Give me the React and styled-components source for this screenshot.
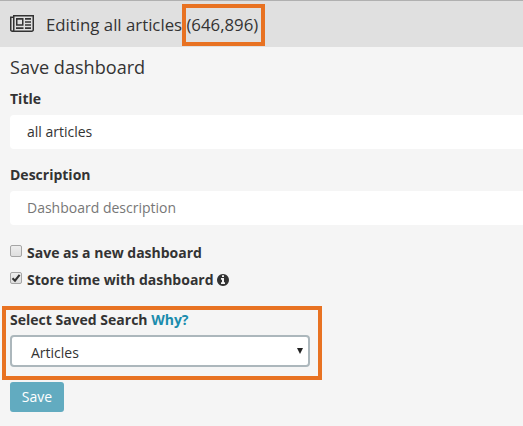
import React, { useState } from "react";
import styled, { createGlobalStyle } from "styled-components";

const GlobalStyle = createGlobalStyle`
  * { box-sizing: border-box; }
  body {
    margin: 0;
    background: #f5f5f5;
    color: #333;
    font: 14px/20px "Open Sans", "Noto Sans", sans-serif;
    overflow: hidden;
  }
`;

const Page = styled.main`
  height: 426px;
  overflow: hidden;
`;

const Header = styled.header`
  display: flex;
  align-items: center;
  height: 47px;
  padding: 1px 10px 0;
  border-top: 1px solid #b0b0b0;
  background: #e0e0e0;
  font-size: 16.8px;
  line-height: 24px;
  white-space: pre;
`;

const NewspaperIcon = styled.svg`
  flex: none;
  width: 24px;
  height: 17px;
  margin: -3px 12px 0 0;
`;

const Highlight = styled.span`
  position: absolute;
  inset: ${(p) => p.$inset};
  border: 4px solid #e87222;
  outline: 1px solid rgba(232, 114, 34, 0.4);
  outline-offset: -1px;
  pointer-events: none;
`;

const Count = styled.span`
  position: relative;
`;

const Form = styled.form`
  display: flex;
  flex-direction: column;
  align-items: flex-start;
  padding: 8px 0 0 10px;
`;

const Heading = styled.h1`
  margin: 0 0 9px;
  font-size: 18.1px;
  line-height: 25px;
  font-weight: 400;
`;

const Label = styled.label`
  height: 20px;
  margin-bottom: 6px;
  font-weight: 700;
`;

const TextInput = styled.input`
  width: 100%;
  height: 34px;
  margin-bottom: 16px;
  padding: 0 17px 1px;
  border: 0;
  border-radius: 4px 0 0 4px;
  background: #fff;
  color: #333;
  font: inherit;
  outline: none;
  &::placeholder { color: #777; opacity: 1; }
`;

const CheckRow = styled.label`
  display: flex;
  align-items: center;
  height: 20px;
  margin: ${(p) => p.$margin};
  font-weight: 700;
`;

const Checkbox = styled.input`
  appearance: none;
  display: grid;
  place-items: center;
  width: 12px;
  height: 12px;
  margin: -4px 5px 0 0;
  border: 1px solid #a5a5a5;
  border-radius: 2px;
  background: linear-gradient(#eee, #dedede);
`;

const CheckBoxWrap = styled.span`
  position: relative;
  display: flex;
`;

const Tick = styled.svg`
  position: absolute;
  left: 1px;
  top: -3px;
  width: 10px;
  height: 10px;
  pointer-events: none;
`;

const InfoIcon = styled.svg`
  width: 12px;
  height: 12px;
  margin-left: 3px;
`;

const SearchGroup = styled.div`
  position: relative;
  display: flex;
  flex-direction: column;
  width: 300px;
`;

const WhyLink = styled.a`
  color: #1b8cad;
`;

const SearchLabel = styled(Label)`
  margin-bottom: 5px;
`;

const SelectBox = styled.button`
  display: flex;
  align-items: center;
  justify-content: space-between;
  width: 300px;
  height: 32px;
  padding: 3px 5px 0 19px;
  border: 2px solid #acb7bc;
  border-radius: 4px;
  background: #fff;
  color: #333;
  font: inherit;
`;

const Arrow = styled.svg`
  width: 6px;
  height: 6px;
  margin-top: -3px;
`;

const SaveButton = styled.button`
  width: 54px;
  height: 30px;
  margin-top: 15px;
  padding: 0;
  border: 0;
  border-radius: 3px;
  background: #62abc0;
  color: #fff;
  font: inherit;
`;

function CheckOption({ label, initial, margin, children }) {
  const [checked, setChecked] = useState(initial);
  return (
    <CheckRow $margin={margin}>
      <CheckBoxWrap>
        <Checkbox type="checkbox" checked={checked} onChange={() => setChecked(!checked)} />
        {checked && (
          <Tick viewBox="0 0 10 10">
            <path d="M1.5 5.2 4 7.7 8.6 1.8" fill="none" stroke="#333" strokeWidth="2.1" />
          </Tick>
        )}
      </CheckBoxWrap>
      {label}
      {children}
    </CheckRow>
  );
}

export default function App() {
  return (
    <Page>
      <GlobalStyle />
      <Header>
        <NewspaperIcon viewBox="0 384 2048 1408" preserveAspectRatio="none" fill="#333">
          <path d="M1024 640h-384v384h384v-384zm128 640v128h-640v-128h640zm0-768v640h-640v-640h640zm640 768v128h-512v-128h512zm0-256v128h-512v-128h512zm0-256v128h-512v-128h512zm0-256v128h-512v-128h512zm-1536 960v-960h-128v960q0 26 19 45t45 19 45-19 19-45zm1664 0v-1088h-1536v1088q0 33-11 64h1483q26 0 45-19t19-45zm128-1216v1216q0 80-56 136t-136 56h-1664q-80 0-136-56t-56-136v-1088h256v-128h1792z" transform="translate(0 128)" />
        </NewspaperIcon>
        Editing all articles{" "}
        <Count>
          (646,896)
          <Highlight $inset="-9px -7px -9px -4px" />
        </Count>
      </Header>
      <Form onSubmit={(e) => e.preventDefault()}>
        <Heading>Save dashboard</Heading>
        <Label htmlFor="title">Title</Label>
        <TextInput id="title" defaultValue="all articles" />
        <Label htmlFor="description">Description</Label>
        <TextInput id="description" placeholder="Dashboard description" />
        <CheckOption label="Save as a new dashboard" initial={false} margin="2px 0 7px" />
        <CheckOption label="Store time with dashboard" initial={true} margin="0 0 20px">
          <InfoIcon viewBox="0 128 1536 1536" fill="#333">
            <path d="M1024 1376v-160q0-14-9-23t-23-9h-96v-512q0-14-9-23t-23-9h-320q-14 0-23 9t-9 23v160q0 14 9 23t23 9h96v320h-96q-14 0-23 9t-9 23v160q0 14 9 23t23 9h448q14 0 23-9t9-23zm-128-896v-160q0-14-9-23t-23-9h-192q-14 0-23 9t-9 23v160q0 14 9 23t23 9h192q14 0 23-9t9-23zm640 416q0 209-103 385.5t-279.5 279.5-385.5 103-385.5-103-279.5-279.5-103-385.5 103-385.5 279.5-279.5 385.5-103 385.5 103 279.5 279.5 103 385.5z" />
          </InfoIcon>
        </CheckOption>
        <SearchGroup>
          <SearchLabel as="div">
            Select Saved Search <WhyLink>Why?</WhyLink>
          </SearchLabel>
          <SelectBox type="button">
            Articles
            <Arrow viewBox="0 0 6 6">
              <path d="M0 0H6L3 6Z" fill="#222" />
            </Arrow>
          </SelectBox>
          <Highlight $inset="-4px -12px -13px -8px" />
        </SearchGroup>
        <SaveButton>Save</SaveButton>
      </Form>
    </Page>
  );
}
